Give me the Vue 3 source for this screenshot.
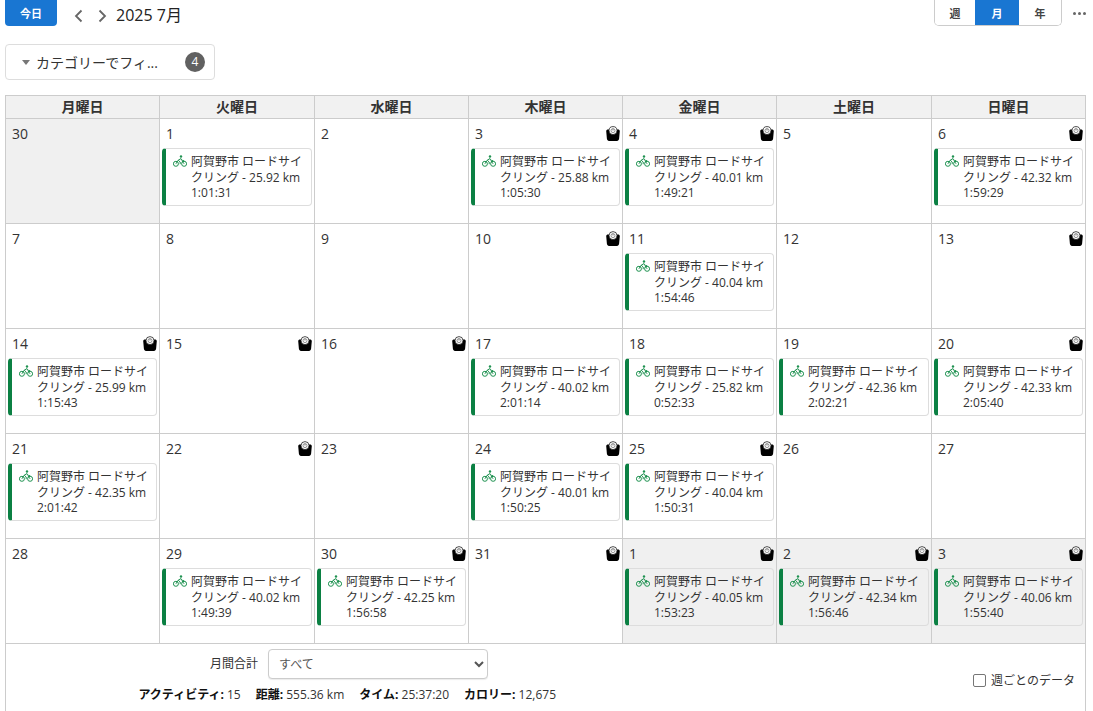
<template>
  <div class="page">
    <div class="toolbar">
      <div class="toolbar-left">
        <button class="btn-today">今日</button>
        <button class="nav-btn" aria-label="前へ">
          <svg width="10" height="14" viewBox="0 0 10 14"><path d="M8.500 1.500 3 7 8.500 12.500" fill="none" stroke="#666" stroke-width="1.800" /></svg>
        </button>
        <button class="nav-btn" aria-label="次へ">
          <svg width="10" height="14" viewBox="0 0 10 14"><path d="M1.500 1.500 7 7 1.500 12.500" fill="none" stroke="#666" stroke-width="1.800" /></svg>
        </button>
        <h1 class="month-title">2025 7月</h1>
      </div>
      <div class="toolbar-right">
        <div class="view-switch">
          <button v-for="v in views" :key="v" class="view-btn" :class="{ active: v === '月' }">{{ v }}</button>
        </div>
        <span class="more"><i></i><i></i><i></i></span>
      </div>
    </div>

    <div class="filter">
      <span class="caret"></span>
      <span class="filter-label">カテゴリーでフィ...</span>
      <span class="filter-count">4</span>
    </div>

    <div class="calendar">
      <div class="head-row cols">
        <div v-for="d in weekdays" :key="d" class="head-cell">{{ d }}</div>
      </div>
      <div class="grid cols">
        <div v-for="c in cells" :key="c.key" class="cell" :class="{ muted: c.muted }">
          <div class="cell-top">
            <span class="day-num">{{ c.day }}</span>
            <svg v-if="c.weight" class="scale" width="14" height="15" viewBox="0 0 14 15">
              <path d="M0.200 5C0.200 4 1 3.400 2 3.400H12C13 3.400 13.800 4 13.800 5L13.100 12.800C13 14 12 14.900 11 14.900H3C2 14.900 1 14 0.900 12.800Z" fill="#000" />
              <circle cx="7" cy="4.600" r="4" fill="#fff" stroke="#222" stroke-width="0.800" />
              <circle cx="7" cy="4.600" r="2" fill="none" stroke="#777" stroke-width="0.800" />
              <path d="M7 4.600 7 2.800" stroke="#555" stroke-width="0.700" />
            </svg>
          </div>
          <div v-if="c.activity" class="activity">
            <svg class="bike" width="14" height="12" viewBox="0 0 14 12" fill="none" stroke="#1e9150" stroke-width="1">
              <circle cx="2.900" cy="8.800" r="2.500" />
              <circle cx="11.100" cy="8.800" r="2.500" />
              <path d="M2.900 8.800 5.200 5.200 7.200 7V9.200M5.200 5.200 8 3.600 9.400 5.600H11.200M8.800 5.600 11.100 8.800" />
              <circle cx="8" cy="1.500" r="1.200" fill="#1e9150" stroke="none" />
            </svg>
            <div class="activity-text">
              <div>阿賀野市 ロードサイクリング - {{ c.activity[0] }} km</div>
              <div>{{ c.activity[1] }}</div>
            </div>
          </div>
        </div>
      </div>
      <div class="summary">
        <div class="summary-main">
          <div class="summary-select">
            <label class="select-label">月間合計</label>
            <select class="select">
              <option>すべて</option>
            </select>
          </div>
          <div class="totals">
            <span><b>アクティビティ:</b> 15</span>
            <span><b>距離:</b> 555.36 km</span>
            <span><b>タイム:</b> 25:37:20</span>
            <span><b>カロリー:</b> 12,675</span>
          </div>
        </div>
        <label class="weekly">
          <span class="check"></span>
          週ごとのデータ
        </label>
      </div>
    </div>
  </div>
</template>

<script setup>
const views = ['週', '月', '年']
const weekdays = ['月曜日', '火曜日', '水曜日', '木曜日', '金曜日', '土曜日', '日曜日']

// [日, 体重アイコン, 距離, タイム, 当月外]
const rows = [
  [30, 0, null, null, 1], [1, 0, '25.92', '1:01:31'], [2, 0], [3, 1, '25.88', '1:05:30'], [4, 1, '40.01', '1:49:21'], [5, 0], [6, 1, '42.32', '1:59:29'],
  [7, 0], [8, 0], [9, 0], [10, 1], [11, 0, '40.04', '1:54:46'], [12, 0], [13, 1],
  [14, 1, '25.99', '1:15:43'], [15, 1], [16, 1], [17, 0, '40.02', '2:01:14'], [18, 0, '25.82', '0:52:33'], [19, 0, '42.36', '2:02:21'], [20, 1, '42.33', '2:05:40'],
  [21, 0, '42.35', '2:01:42'], [22, 1], [23, 0], [24, 1, '40.01', '1:50:25'], [25, 1, '40.04', '1:50:31'], [26, 0], [27, 0],
  [28, 0], [29, 0, '40.02', '1:49:39'], [30, 1, '42.25', '1:56:58'], [31, 1], [1, 1, '40.05', '1:53:23', 1], [2, 1, '42.34', '1:56:46', 1], [3, 1, '40.06', '1:55:40', 1],
]

const cells = rows.map((r, i) => ({
  key: i,
  day: r[0],
  weight: !!r[1],
  activity: r[2] ? [r[2], r[3]] : null,
  muted: !!r[4],
}))
</script>

<style>
html, body { background: #fff; overflow: hidden; }
</style>

<style scoped>
.page {
  width: 1093px;
  height: 711px;
  overflow: hidden;
  box-sizing: border-box;
  padding: 0 7px 0 5px;
  font-family: "Open Sans", "Noto Sans CJK JP", sans-serif;
  color: #222;
}
.toolbar {
  display: flex;
  justify-content: space-between;
  height: 44px;
}
.toolbar-left { display: flex; align-items: flex-start; }
.btn-today {
  width: 52px;
  height: 26px;
  margin-right: 8px;
  border: none;
  border-radius: 0 0 4px 4px;
  background: #1976d2;
  color: #fff;
  font: 600 11px "Open Sans", "Noto Sans CJK JP", sans-serif;
  padding: 0;
}
.nav-btn {
  width: 25px;
  height: 31px;
  padding: 0;
  border: none;
  background: none;
  display: flex;
  align-items: center;
  justify-content: center;
}
.month-title {
  margin: 0 0 0 1px;
  font-size: 16px;
  font-weight: 400;
  line-height: 30px;
  color: #222;
}
.toolbar-right { display: flex; align-items: flex-start; }
.view-switch {
  display: flex;
  height: 26px;
  box-sizing: border-box;
  border: 1px solid #ccc;
  border-top: none;
  border-radius: 0 0 5px 5px;
  overflow: hidden;
}
.view-btn {
  width: 42px;
  border: none;
  background: #fff;
  color: #444;
  padding: 0;
  font: 600 11px "Open Sans", "Noto Sans CJK JP", sans-serif;
}
.view-btn:first-child { width: 40px; }
.view-btn.active { width: 44px; background: #1976d2; color: #fff; }
.more {
  display: flex;
  gap: 2px;
  margin: 12px 0 0 11px;
  width: 13px;
}
.more i {
  width: 3px;
  height: 3px;
  border-radius: 50%;
  background: #666;
}
.filter {
  width: 210px;
  height: 36px;
  box-sizing: border-box;
  border: 1px solid #ddd;
  border-radius: 4px;
  display: flex;
  align-items: center;
  padding: 0 9px 0 16px;
  font-size: 14px;
  color: #333;
}
.caret {
  border: 4px solid transparent;
  border-top: 5px solid #777;
  border-bottom: none;
  margin-right: 6px;
}
.filter-label { flex: 1; white-space: nowrap; }
.filter-count {
  width: 20px;
  height: 20px;
  border-radius: 50%;
  background: #616161;
  color: #fff;
  font-size: 12px;
  line-height: 20px;
  text-align: center;
}
.calendar {
  margin-top: 15px;
  border: 1px solid #ccc;
  border-bottom: none;
}
.cols {
  display: grid;
  grid-template-columns: 154px 155px 154px 154px 154px 155px 153px;
}
.head-row {
  height: 22px;
  background: #f1f1f1;
  border-bottom: 1px solid #ccc;
}
.head-cell {
  border-right: 1px solid #ccc;
  text-align: center;
  font-size: 14px;
  font-weight: 600;
  line-height: 22px;
  color: #333;
}
.head-cell:last-child { border-right: none; }
.grid { grid-auto-rows: 105px; }
.cell {
  box-sizing: border-box;
  border-right: 1px solid #ccc;
  border-bottom: 1px solid #ccc;
  padding: 6px 2px 0 2px;
  min-width: 0;
}
.cell:nth-child(7n) { border-right: none; }
.cell.muted { background: #f0f0f0; }
.cell-top {
  display: flex;
  justify-content: space-between;
  height: 23px;
  padding: 0 0 0 4px;
  font-size: 14px;
  line-height: 18px;
  color: #333;
}
.scale { margin-top: 1px; }
.activity {
  display: flex;
  height: 58px;
  box-sizing: border-box;
  border: 1px solid #ddd;
  border-left: 4px solid #0b8043;
  border-radius: 4px;
  padding: 5px 6px 0 7px;
  font-size: 12px;
  line-height: 15.500px;
  color: #333;
  background: #fff;
}
.muted .activity { background: #f0f0f0; }
.bike { flex: none; margin: 1px 4px 0 0; }
.activity-text { min-width: 0; }
.summary {
  position: relative;
  height: 70px;
}
.summary-main {
  width: 550px;
  padding-top: 5px;
}
.summary-select {
  display: flex;
  justify-content: flex-end;
  align-items: center;
  gap: 10px;
  padding-right: 68px;
  height: 30px;
}
.select-label { font-size: 12px; color: #333; margin-bottom: 2px; }
.select {
  width: 220px;
  height: 30px;
  border: 1px solid #ccc;
  border-radius: 4px;
  background: #fff;
  color: #555;
  font: 12px "Open Sans", "Noto Sans CJK JP", sans-serif;
  padding: 0 6px;
  box-shadow: 0 1px 1px rgba(0,0,0,.08);
}
.totals {
  display: flex;
  justify-content: flex-end;
  gap: 15px;
  margin-top: 6px;
  font-size: 12px;
  color: #333;
}
.totals b { color: #111; font-weight: 700; }
.weekly {
  position: absolute;
  right: 10px;
  top: 27px;
  display: flex;
  align-items: center;
  gap: 5px;
  font-size: 12px;
  color: #333;
}
.check {
  width: 11px;
  height: 11px;
  border: 1px solid #767676;
  border-radius: 2px;
}
</style>
